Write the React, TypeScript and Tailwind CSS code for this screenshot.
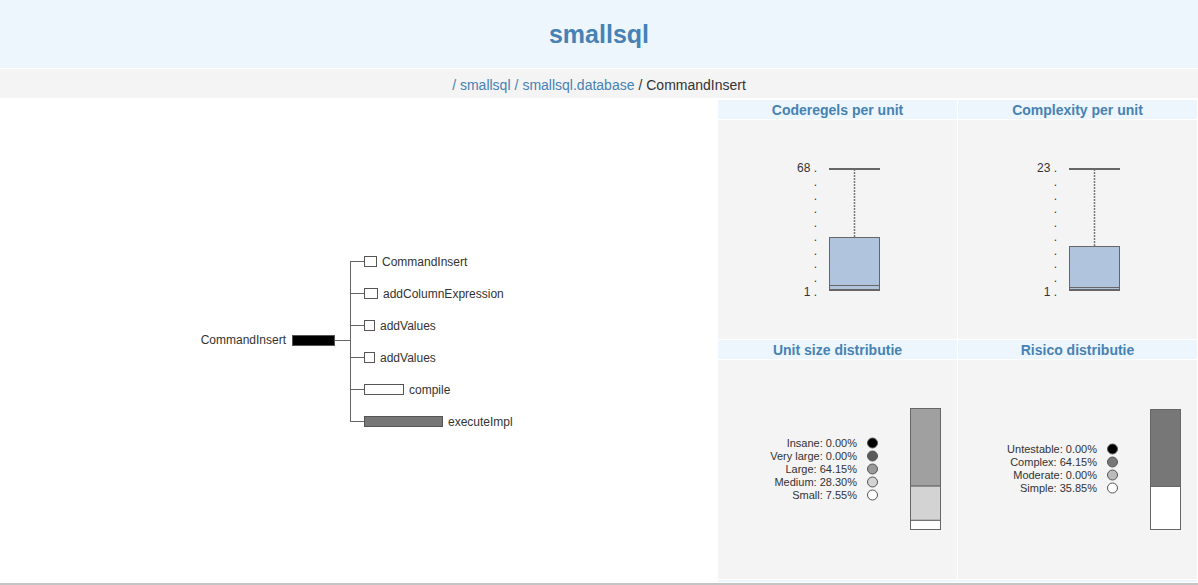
import React from "react"

const font = "'Liberation Sans', Arial, Helvetica, sans-serif"

const children = [
  { name: "CommandInsert", w: 12, fill: "#fff" },
  { name: "addColumnExpression", w: 13, fill: "#fff" },
  { name: "addValues", w: 10, fill: "#fff" },
  { name: "addValues", w: 10, fill: "#fff" },
  { name: "compile", w: 39, fill: "#fff" },
  { name: "executeImpl", w: 78, fill: "#777" },
]

const Tree = () => (
  <svg width={320} height={184} style={{ fontFamily: font }}>
    <text x={87} y={95} fontSize={12} fill="#333" textAnchor="end">
      CommandInsert
    </text>
    <rect x={93.5} y={86.5} width={42} height={10} fill="#000" stroke="#555" />
    <line x1={136} y1={91.5} x2={151} y2={91.5} stroke="#666" />
    <line x1={151.5} y1={12} x2={151.5} y2={172} stroke="#666" />
    {children.map((c, i) => {
      const y = 12 + i * 32
      return (
        <g key={`child${i}`}>
          <line x1={151} y1={y + 0.5} x2={166} y2={y + 0.5} stroke="#666" />
          <rect x={165.5} y={y - 4.5} width={c.w} height={10} fill={c.fill} stroke="#555" />
          <text x={166 + c.w + 5} y={y + 4.5} fontSize={12} fill="#333">
            {c.name}
          </text>
        </g>
      )
    })}
  </svg>
)

const BoxPlot = ({ max, boxTop, median }: { max: string; boxTop: number; median: number }) => {
  const ticks = Array.from({ length: 10 }, (_, i) => 49 + i * 13.78)
  return (
    <svg width={239} height={219} style={{ fontFamily: font }}>
      {ticks.map((y, i) => (
        <text key={`tick${i}`} x={99} y={i === 9 ? 176 : y + 3} fontSize={12} fill="#333" textAnchor="end">
          {i === 0 ? `${max} .` : i === 9 ? "1 ." : "."}
        </text>
      ))}
      <line x1={111} y1={49} x2={162} y2={49} stroke="#666" strokeWidth={2} />
      <line x1={136.5} y1={49} x2={136.5} y2={boxTop} stroke="#777" strokeWidth={1.5} strokeDasharray="2 1" />
      <rect x={111.5} y={boxTop + 0.5} width={50} height={170 - boxTop} fill="#b0c4de" stroke="#666" />
      <line x1={111} y1={median + 0.5} x2={162} y2={median + 0.5} stroke="#666" />
      <line x1={111} y1={170} x2={162} y2={170} stroke="#666" strokeWidth={2} />
    </svg>
  )
}

const Distribution = ({
  rows,
  segments,
  top,
  height,
  firstY,
}: {
  rows: { label: string; color: string }[]
  segments: { pct: number; color: string }[]
  top: number
  height: number
  firstY: number
}) => {
  let y = top
  return (
    <svg width={239} height={219} style={{ fontFamily: font }}>
      {rows.map((r, i) => {
        const cy = firstY + i * 13
        return (
          <g key={`row${i}`}>
            <text x={139} y={cy + 4} fontSize={11} fill="#333" textAnchor="end">
              {r.label}
            </text>
            <circle cx={154.5} cy={cy} r={5} fill={r.color} stroke="#555" />
          </g>
        )
      })}
      {segments.map((s, i) => {
        const h = (s.pct / 100) * height
        const el = (
          <rect key={`seg${i}`} x={192.5} y={y + 0.5} width={30} height={h} fill={s.color} stroke="#666" />
        )
        y += h
        return el
      })}
    </svg>
  )
}

const Panel = ({ title, children }: { title: string; children: React.ReactNode }) => (
  <div className="flex flex-col">
    <div className="h-[19px] mb-[1px] pt-[2px] bg-[#eef6fd] text-center text-[14px] leading-[17px] font-bold text-[#4682b4]">
      {title}
    </div>
    <div className="h-[219px] bg-[#f4f4f4]">{children}</div>
  </div>
)

const App = () => (
  <div className="w-[1198px] h-[585px] bg-white overflow-hidden" style={{ fontFamily: font }}>
    <header className="h-[68px] bg-[#eef6fd] flex items-center justify-center">
      <h1 className="text-[25px] font-bold text-[#4682b4] leading-none mt-[1px]">smallsql</h1>
    </header>
    <nav className="mt-[1px] h-[29px] pt-[3px] bg-[#f4f4f4] flex items-center justify-center text-[14px] text-[#333]">
      <a className="text-[#4682b4]">/ smallsql</a>
      <span className="mx-[4px] text-[#4682b4]">/</span>
      <a className="text-[#4682b4]">smallsql.database</a>
      <span className="ml-[4px]">/ CommandInsert</span>
    </nav>
    <main className="flex h-[485px]">
      <section className="flex-1 flex items-center justify-center pt-[1px]">
        <Tree />
      </section>
      <section className="w-[480px] pt-[2px] pr-[1px] flex flex-col gap-[1px]">
        <div className="grid grid-cols-2 gap-[1px]">
          <Panel title="Coderegels per unit">
            <BoxPlot max="68" boxTop={117} median={165} />
          </Panel>
          <Panel title="Complexity per unit">
            <BoxPlot max="23" boxTop={126} median={167} />
          </Panel>
          <Panel title="Unit size distributie">
            <Distribution
              top={48}
              height={121}
              firstY={83}
              rows={[
                { label: "Insane: 0.00%", color: "#000" },
                { label: "Very large: 0.00%", color: "#5a5a5a" },
                { label: "Large: 64.15%", color: "#999" },
                { label: "Medium: 28.30%", color: "#d3d3d3" },
                { label: "Small: 7.55%", color: "#fff" },
              ]}
              segments={[
                { pct: 0, color: "#000" },
                { pct: 0, color: "#5a5a5a" },
                { pct: 64.15, color: "#a0a0a0" },
                { pct: 28.3, color: "#d3d3d3" },
                { pct: 7.55, color: "#fff" },
              ]}
            />
          </Panel>
          <Panel title="Risico distributie">
            <Distribution
              top={49}
              height={120}
              firstY={89}
              rows={[
                { label: "Untestable: 0.00%", color: "#000" },
                { label: "Complex: 64.15%", color: "#777" },
                { label: "Moderate: 0.00%", color: "#bbb" },
                { label: "Simple: 35.85%", color: "#fff" },
              ]}
              segments={[
                { pct: 64.15, color: "#777" },
                { pct: 35.85, color: "#fff" },
              ]}
            />
          </Panel>
        </div>
        <div className="h-[2px] bg-[#eef6fd]" />
      </section>
    </main>
    <div className="h-[2px] bg-[#c4c4c4]" />
  </div>
)

export default App
